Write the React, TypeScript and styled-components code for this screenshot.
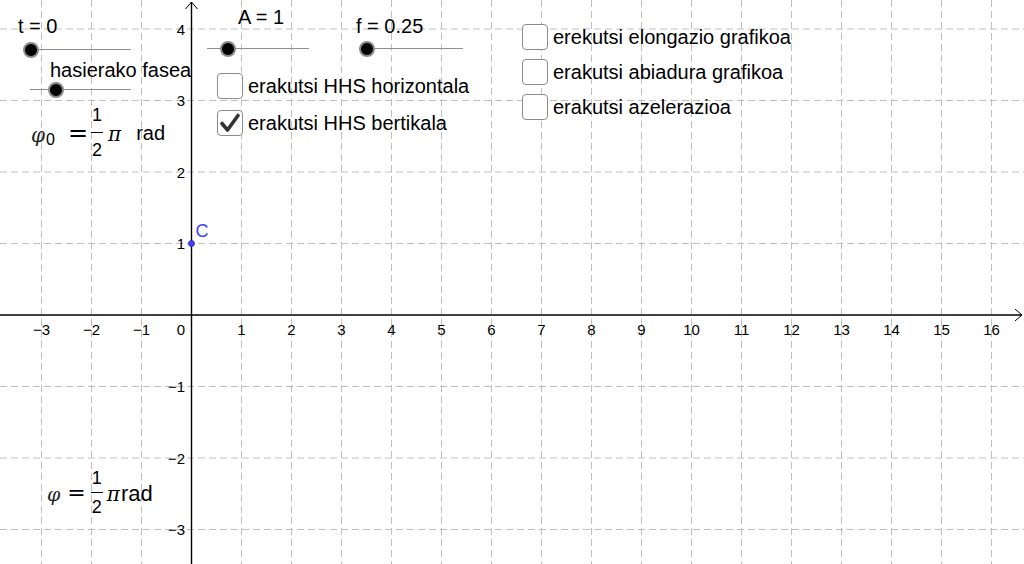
import React from 'react'
import styled, { createGlobalStyle } from 'styled-components'

const GlobalStyle = createGlobalStyle`
  html, body {
    margin: 0;
    padding: 0;
    background: #ffffff;
  }
  body {
    font-family: "Liberation Sans", Arial, sans-serif;
    color: #000;
  }
`

const Stage = styled.div`
  position: relative;
  width: 1024px;
  height: 564px;
  overflow: hidden;
  background: #ffffff;
`

const Graph = styled.svg`
  display: block;
  font-family: "Liberation Sans", Arial, sans-serif;
`

const Caption = styled.div<{ $x: number; $y: number }>`
  position: absolute;
  left: ${p => p.$x}px;
  top: ${p => p.$y}px;
  font-size: 20px;
  line-height: 20px;
  white-space: nowrap;
`

const Track = styled.div<{ $x: number; $y: number; $w: number }>`
  position: absolute;
  left: ${p => p.$x}px;
  top: ${p => p.$y}px;
  width: ${p => p.$w}px;
  height: 1px;
  background: #8e8e8e;
`

const Knob = styled.span<{ $at: number }>`
  position: absolute;
  left: ${p => p.$at - 8}px;
  top: -7.5px;
  width: 12px;
  height: 12px;
  border-radius: 50%;
  background: #000;
  border: 2px solid #8a8a8a;
`

const CheckList = styled.div<{ $x: number; $y: number; $gap: number }>`
  position: absolute;
  left: ${p => p.$x}px;
  top: ${p => p.$y}px;
  display: flex;
  flex-direction: column;
  gap: ${p => p.$gap}px;
`

const CheckRow = styled.label`
  display: flex;
  align-items: center;
  gap: 5px;
  font-size: 20px;
  line-height: 20px;
  white-space: nowrap;
`

const Box = styled.span`
  box-sizing: border-box;
  width: 26px;
  height: 26px;
  border: 1.5px solid #8c8c8c;
  border-radius: 4px;
  background: #fff;
  display: flex;
  align-items: center;
  justify-content: center;
`

const Formula = styled.div<{ $x: number; $y: number }>`
  position: absolute;
  left: ${p => p.$x}px;
  top: ${p => p.$y}px;
  display: flex;
  align-items: center;
  white-space: nowrap;
  font-family: "Liberation Serif", "DejaVu Serif", serif;
  font-size: 22px;
`

const Phi = styled.span<{ $size: number }>`
  font-style: italic;
  font-family: "DejaVu Serif", "Liberation Serif", serif;
  font-size: ${p => p.$size}px;
  line-height: 1;
  margin-top: 4px;
  color: #222;
`

const Sub = styled.span`
  font-family: "Liberation Sans", Arial, sans-serif;
  font-size: 16px;
  line-height: 16px;
  margin-top: 14px;
  margin-left: 1px;
`

const Eq = styled.span<{ $size: number; $left: number; $right: number }>`
  margin: 0 ${p => p.$right}px 0 ${p => p.$left}px;
  font-size: ${p => p.$size}px;
  line-height: 1;
  font-family: "DejaVu Sans", sans-serif;
`

const Frac = styled.span<{ $size: number; $space: number }>`
  display: inline-flex;
  flex-direction: column;
  align-items: center;
  font-family: "Liberation Sans", Arial, sans-serif;
  font-size: ${p => p.$size}px;
  line-height: ${p => p.$size}px;

  & > span:first-child {
    padding: 0 1px ${p => p.$space}px;
    border-bottom: 1px solid #000;
  }
  & > span:last-child {
    padding: ${p => p.$space}px 1px 0;
  }
`

const Pi = styled.span<{ $gap: number }>`
  font-style: italic;
  font-family: "DejaVu Serif", serif;
  font-size: 20px;
  margin-left: ${p => p.$gap}px;
  margin-top: 2px;
`

const Unit = styled.span<{ $gap: number; $size: number }>`
  font-family: "Liberation Sans", Arial, sans-serif;
  font-size: ${p => p.$size}px;
  margin-left: ${p => p.$gap}px;
  margin-top: 2px;
`

const CheckMark = () => (
  <svg width="22" height="22" viewBox="0 0 22 22">
    <path
      d="M3 11.5 L8.5 18 L19 3.5"
      fill="none"
      stroke="#333"
      strokeWidth="3.6"
      strokeLinecap="round"
      strokeLinejoin="round"
    />
  </svg>
)

const Slider: React.FC<{ x: number; y: number; w: number; at: number }> = ({ x, y, w, at }) => (
  <Track $x={x} $y={y} $w={w}>
    <Knob $at={at} />
  </Track>
)

const Check: React.FC<{ label: string; checked?: boolean }> = ({ label, checked }) => (
  <CheckRow>
    <Box>{checked && <CheckMark />}</Box>
    {label}
  </CheckRow>
)

const X0 = 191.5
const Y0 = 315
const UX = 50
const UY = 71.5
const px = (k: number) => X0 + UX * k
const py = (k: number) => Y0 - UY * k
const xTicks = Array.from({ length: 20 }, (_, i) => i - 3).filter(k => k !== 0)
const yTicks = [-3, -2, -1, 1, 2, 3, 4]
const num = (k: number) => (k < 0 ? `\u2212${-k}` : `${k}`)

const Plane = () => (
  <Graph width={1024} height={564} viewBox="0 0 1024 564">
    <g stroke="#c0c0c0" strokeWidth="1" strokeDasharray="7 4">
      {xTicks.map(k => (
        <line key={`vx${k}`} x1={px(k)} y1={0} x2={px(k)} y2={564} />
      ))}
      {yTicks.map(k => (
        <line key={`hy${k}`} x1={0} y1={py(k)} x2={1024} y2={py(k)} />
      ))}
    </g>
    <g stroke="#000" strokeWidth="1.4" fill="none">
      <line x1={0} y1={Y0} x2={1022} y2={Y0} />
      <polyline points={`1015,${Y0 - 6} 1022,${Y0} 1015,${Y0 + 6}`} strokeWidth="1" />
      <line x1={X0} y1={2} x2={X0} y2={564} />
      <polyline points={`${X0 - 6},9 ${X0},2 ${X0 + 6},9`} strokeWidth="1" />
    </g>
    <g fontSize="15" fill="#000">
      {xTicks.map(k => (
        <text key={`tx${k}`} x={px(k)} y={335} textAnchor="middle">
          {num(k)}
        </text>
      ))}
      <text x={181} y={335} textAnchor="middle">0</text>
      {yTicks.map(k => (
        <text key={`ty${k}`} x={185} y={py(k) + 5.5} textAnchor="end">
          {num(k)}
        </text>
      ))}
    </g>
    <circle cx={X0} cy={py(1)} r={3} fill="#4040ff" stroke="#2020a0" strokeWidth="0.8" />
    <text x={195.5} y={237} fontSize="18" fill="#4040ff">C</text>
  </Graph>
)

export default function App() {
  return (
    <>
      <GlobalStyle />
      <Stage>
        <Plane />

        <Caption $x={18} $y={16}>t = 0</Caption>
        <Slider x={30} y={49} w={101} at={1} />

        <Caption $x={50} $y={60}>hasierako fasea</Caption>
        <Slider x={30} y={89} w={101} at={26} />

        <Caption $x={238} $y={7}>A = 1</Caption>
        <Slider x={207} y={48} w={102} at={21} />

        <Caption $x={356} $y={16}>f = 0.25</Caption>
        <Slider x={359} y={48} w={104} at={8} />

        <CheckList $x={217} $y={73} $gap={11}>
          <Check label="erakutsi HHS horizontala" />
          <Check label="erakutsi HHS bertikala" checked />
        </CheckList>

        <CheckList $x={522} $y={24} $gap={9}>
          <Check label="erekutsi elongazio grafikoa" />
          <Check label="erakutsi abiadura grafikoa" />
          <Check label="erakutsi azelerazioa" />
        </CheckList>

        <Formula $x={31} $y={106}>
          <Phi $size={20}>φ</Phi>
          <Sub>0</Sub>
          <Eq $size={24} $left={13} $right={3}>=</Eq>
          <Frac $size={18} $space={8}>
            <span>1</span>
            <span>2</span>
          </Frac>
          <Pi $gap={5}>π</Pi>
          <Unit $gap={15} $size={20}>rad</Unit>
        </Formula>

        <Formula $x={47} $y={469}>
          <Phi $size={19}>φ</Phi>
          <Eq $size={22} $left={7} $right={5}>=</Eq>
          <Frac $size={18} $space={5}>
            <span>1</span>
            <span>2</span>
          </Frac>
          <Pi $gap={4}>π</Pi>
          <Unit $gap={1} $size={22}>rad</Unit>
        </Formula>
      </Stage>
    </>
  )
}
